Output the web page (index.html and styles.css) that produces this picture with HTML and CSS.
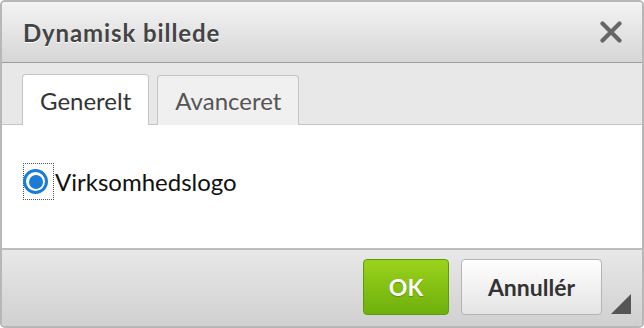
FILE: index.html
```html
<!DOCTYPE html>
<html>
<head>
<meta charset="utf-8">
<link rel="stylesheet" href="styles.css">
</head>
<body>
<div class="dialog">
  <div class="head">
    <span class="title">Dynamisk billede</span>
    <svg class="close" width="22" height="22" viewBox="0 0 22 22"><path d="M2.5 2.5 L19.5 19.5 M19.5 2.5 L2.5 19.5" stroke="#666" stroke-width="4.2" stroke-linecap="round"/></svg>
  </div>
  <div class="tabs">
    <div class="tab active">Generelt</div>
    <div class="tab">Avanceret</div>
  </div>
  <div class="body">
    <label class="radio-row">
      <span class="focus"><span class="radio"><span class="dot"></span></span></span>
      <span class="label">Virksomhedslogo</span>
    </label>
  </div>
  <div class="foot">
    <button class="btn ok">OK</button>
    <button class="btn cancel">Annullér</button>
    <span class="grip"></span>
  </div>
</div>
</body>
</html>
```
FILE: styles.css
```css
* { box-sizing: border-box; }
html, body { margin: 0; padding: 0; background: #fff; }
body { font-family: Lato, "Open Sans", sans-serif; }
.dialog {
  width: 644px; height: 328px;
  border: 2px solid #b7b7b7;
  border-radius: 5px;
  display: flex; flex-direction: column;
  overflow: hidden;
  background: #fff;
}
.head {
  height: 61px;
  background: linear-gradient(#f3f3f3, #d6d6d6);
  border-bottom: 1px solid #9c9c9c;
  display: flex; align-items: center; justify-content: space-between;
  padding: 0 20px 0 21px;
}
.title {
  font-size: 24px; font-weight: bold; color: #444;
  letter-spacing: 0.9px;
  text-shadow: 0 1px 0 #fff;
}
.close { display: block; margin-top: 0; }
.tabs {
  height: 62px;
  background: #e8e8e8;
  border-bottom: 1px solid #c5c5c5;
  display: flex; align-items: flex-end;
  padding-left: 20px; gap: 8px;
}
.tab {
  height: 50px; margin-bottom: -1px;
  border: 1px solid #c5c5c5; border-bottom: none;
  border-radius: 4px 4px 0 0;
  background: #f0f0f0;
  color: #555; font-size: 24px;
  padding: 0 17px; display: flex; align-items: center;
}
.tab.active { background: #fff; color: #333; height: 51px; }
.body {
  flex: 1;
  border-bottom: 2px solid #bdbdbd;
  padding-top: 38px; padding-left: 21px;
}
.radio-row { display: flex; align-items: center; }
.focus {
  border: 1px dotted #555; width: 31px; height: 37px;
  display: flex; align-items: center;
}
.radio {
  width: 25px; height: 25px; border-radius: 50%; margin-left: -1px;
  border: 3px solid #1a7bd8; display: flex; align-items: center; justify-content: center;
}
.dot { width: 14px; height: 14px; border-radius: 50%; background: #1a7bd8; }
.label { font-size: 24px; color: #111; margin-left: 1px; }
.foot {
  height: 76px;
  background: linear-gradient(#e8e8e8, #d0d0d0);
  display: flex; align-items: center; justify-content: flex-end;
  padding-right: 40px; gap: 12px; position: relative;
}
.btn {
  height: 56px; border-radius: 4px; font-family: Lato, sans-serif;
  font-size: 23px; font-weight: bold; margin-top: -2px;
}
.ok {
  width: 86px;
  background: linear-gradient(#9bd21c, #6eb00c);
  border: 1px solid #5c9c08; color: #fff;
  text-shadow: 0 1px 1px rgba(0,0,0,0.25);
}
.cancel {
  width: 141px;
  background: linear-gradient(#ffffff, #e4e4e4);
  border: 1px solid #b4b4b4; color: #333;
}
.grip {
  position: absolute; right: 11px; bottom: 12px;
  width: 0; height: 0;
  border-left: 20px solid transparent;
  border-bottom: 20px solid #555;
}
```
